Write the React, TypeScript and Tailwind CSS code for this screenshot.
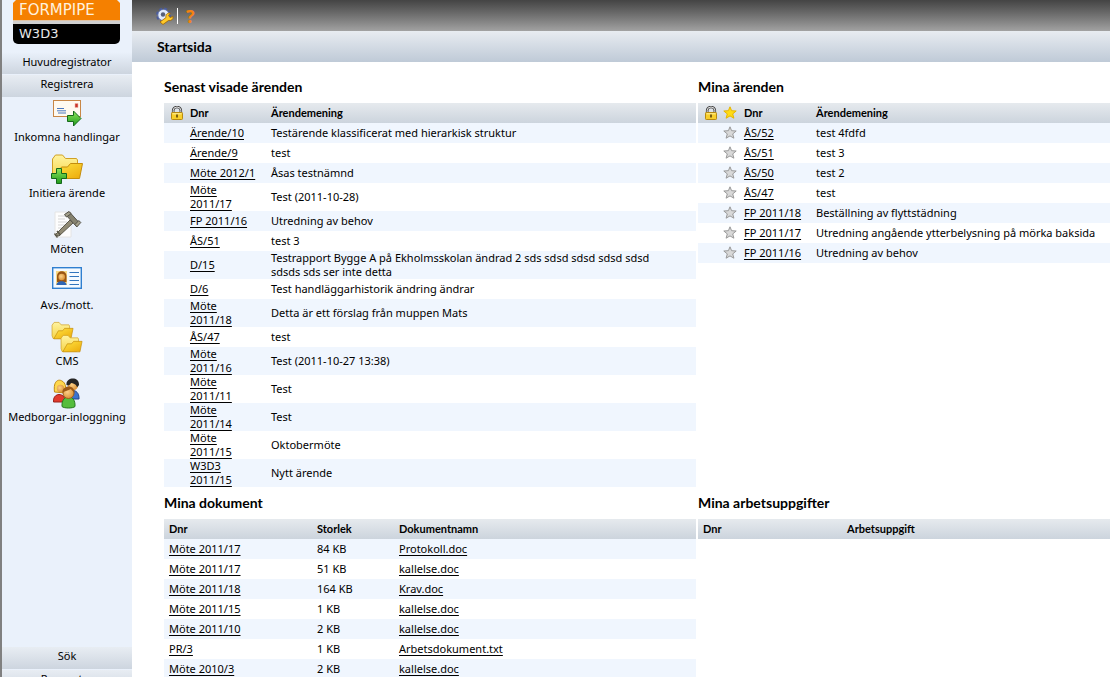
import React from "react";

const cases = [
  ["Ärende/10", "Testärende klassificerat med hierarkisk struktur"],
  ["Ärende/9", "test"],
  ["Möte 2012/1", "Åsas testnämnd"],
  ["Möte 2011/17", "Test (2011-10-28)"],
  ["FP 2011/16", "Utredning av behov"],
  ["ÅS/51", "test 3"],
  ["D/15", "Testrapport Bygge A på Ekholmsskolan ändrad 2 sds sdsd sdsd sdsd sdsd sdsds sds ser inte detta"],
  ["D/6", "Test handläggarhistorik ändring ändrar"],
  ["Möte 2011/18", "Detta är ett förslag från muppen Mats"],
  ["ÅS/47", "test"],
  ["Möte 2011/16", "Test (2011-10-27 13:38)"],
  ["Möte 2011/11", "Test"],
  ["Möte 2011/14", "Test"],
  ["Möte 2011/15", "Oktobermöte"],
  ["W3D3 2011/15", "Nytt ärende"],
];

const myCases = [
  ["ÅS/52", "test 4fdfd"],
  ["ÅS/51", "test 3"],
  ["ÅS/50", "test 2"],
  ["ÅS/47", "test"],
  ["FP 2011/18", "Beställning av flyttstädning"],
  ["FP 2011/17", "Utredning angående ytterbelysning på mörka baksida"],
  ["FP 2011/16", "Utredning av behov"],
];

const documents = [
  ["Möte 2011/17", "84 KB", "Protokoll.doc"],
  ["Möte 2011/17", "51 KB", "kallelse.doc"],
  ["Möte 2011/18", "164 KB", "Krav.doc"],
  ["Möte 2011/15", "1 KB", "kallelse.doc"],
  ["Möte 2011/10", "2 KB", "kallelse.doc"],
  ["PR/3", "1 KB", "Arbetsdokument.txt"],
  ["Möte 2010/3", "2 KB", "kallelse.doc"],
];

const Lock = () => (
  <svg width="14" height="14" viewBox="0 0 14 14" className="block" aria-hidden="true">
    <path d="M3.2 7V4.6a3.8 3.6 0 0 1 7.6 0V7" fill="none" stroke="#444" strokeWidth="2.6" />
    <path d="M3.2 7V4.6a3.8 3.6 0 0 1 7.6 0V7" fill="none" stroke="#e2e2e2" strokeWidth="1" />
    <rect x="1.5" y="6.5" width="11" height="7" rx=".8" fill="#f8cf2c" stroke="#b88a10" />
    <path d="M2.5 7.8h9" stroke="#fff0a0" />
    <path d="M7 8.6v3" stroke="#5b430a" strokeWidth="1.6" />
  </svg>
);

const Star = ({ gold = false }: { gold?: boolean }) => (
  <svg width="14" height="14" viewBox="0 0 14 14" className="block" aria-hidden="true">
    <path
      d="M7 .8l1.600 3.900 4.600.3-3.500 2.900 1.200 4.300L7 9.900l-3.900 2.300 1.200-4.300L.8 5l4.600-.3z"
      fill={gold ? "#ffdc14" : "#d8d8d8"}
      stroke={gold ? "#e6b400" : "#999"}
      strokeWidth="1"
      strokeLinejoin="round"
    />
  </svg>
);

const Defs = () => (
  <svg width="0" height="0" className="absolute" aria-hidden="true">
    <defs>
      <linearGradient id="back" x1="0" y1="0" x2="0" y2="1">
        <stop offset="0" stopColor="#fff3a0" />
        <stop offset="1" stopColor="#f6d548" />
      </linearGradient>
      <linearGradient id="front" x1="0" y1="0" x2="1" y2="1">
        <stop offset="0" stopColor="#ffe545" />
        <stop offset="1" stopColor="#eca908" />
      </linearGradient>
      <linearGradient id="green" x1="0" y1="0" x2="0" y2="1">
        <stop offset="0" stopColor="#8ee65c" />
        <stop offset="1" stopColor="#1f9a1c" />
      </linearGradient>
      <radialGradient id="skin" cx=".4" cy=".4" r=".7">
        <stop offset="0" stopColor="#fcd087" />
        <stop offset="1" stopColor="#d68a2d" />
      </radialGradient>
    </defs>
  </svg>
);

const MailIcon = () => (
  <svg width="32" height="32" viewBox="0 0 32 32" className="block" aria-hidden="true">
    <rect x="2.5" y="3.5" width="27" height="16" fill="#fffaf0" stroke="#c88746" />
    <path d="M24 6.500h3v4h-3z" fill="#c9342b" stroke="#efb5a5" strokeWidth=".6" />
    <path d="M6 11.500h7M6 13.800h9M7 16h8" stroke="#4a78c0" strokeWidth="1" />
    <path d="M16.500 18.500h6v-4.500l7.500 7.500-7.500 7.500v-4.500h-6z" fill="url(#green)" stroke="#14691a" strokeLinejoin="round" />
  </svg>
);

const Folder = () => (
  <>
    <path d="M1.500 21V6l3-4h7l3 3.500h11l1 1.500V21l-3 4H3z" fill="url(#back)" stroke="#d0a024" strokeLinejoin="round" />
    <path d="M4 25.500L10.500 14h6l3-3.500h12L28.500 25.500z" fill="url(#front)" stroke="#c48d0c" strokeLinejoin="round" />
  </>
);

const NewCaseIcon = () => (
  <svg width="32" height="32" viewBox="0 0 32 32" className="block" aria-hidden="true">
    <Folder />
    <path d="M5.500 15.500h5v5h5v5h-5v5h-5v-5h-5v-5h5z" fill="url(#green)" stroke="#14691a" strokeLinejoin="round" />
  </svg>
);

const GavelIcon = () => (
  <svg width="32" height="32" viewBox="0 0 32 32" className="block" aria-hidden="true">
    <path d="M4 3h16v25H4z" fill="#fdfdfd" stroke="#e4e4e4" />
    <path d="M7 7h9M7 10h7M7 13h9M7 16h7M7 19h5" stroke="#d5d5d5" />
    <path d="M4 26L19 11l3 3L8 27z" fill="#918b75" stroke="#5c594b" strokeLinejoin="round" />
    <path d="M3.500 24.500l3 4M6 22l3.500 4" stroke="#5c594b" strokeWidth="1.500" />
    <path d="M14.500 5.500l4-2.500 9.500 10.500-3 3.500z" fill="#85826f" stroke="#55534a" strokeLinejoin="round" />
    <path d="M13.500 5.500L18 2.500l2 2.200-4.500 3.300zM24 15.500l3.800-4 2 2-4 4.500z" fill="#a39f89" stroke="#55534a" strokeLinejoin="round" />
  </svg>
);

const CardIcon = () => (
  <svg width="32" height="32" viewBox="0 0 32 32" className="block" aria-hidden="true">
    <rect x="1.700" y="2.700" width="28.600" height="20.600" fill="#f5faff" stroke="#2f7fd0" strokeWidth="1.400" />
    <path d="M5 6h11v14H5z" fill="#f7d987" />
    <path d="M6 17v-6c0-6.500 9.500-6.500 9.500 0v6z" fill="#9a5514" />
    <circle cx="10.700" cy="12" r="3.300" fill="url(#skin)" />
    <path d="M5.500 20c0-5 10-5 10 0z" fill="#2e65b5" />
    <path d="M18.500 7.500h9.500M18.500 11.500h9.500M18.500 15.500h9.500M18.500 19.500h9.500" stroke="#3275bd" strokeWidth="1" />
  </svg>
);

const FoldersIcon = () => (
  <svg width="32" height="32" viewBox="0 0 32 32" className="block" aria-hidden="true">
    <g transform="translate(0 0) scale(.7)"><Folder /></g>
    <g transform="translate(9 13) scale(.7)"><Folder /></g>
  </svg>
);

const PeopleIcon = () => (
  <svg width="32" height="32" viewBox="0 0 32 32" className="block" aria-hidden="true">
    <path d="M16 21c0-10 12-10 12 0v1H16z" fill="#3a73cf" stroke="#23488d" />
    <circle cx="22" cy="8.500" r="5" fill="url(#skin)" />
    <path d="M15.500 8c-1-8 13-9 12.500 0-1 1.500-1.500 2-2 2-1-3-4-4-6-4-1 2-2.500 3-4.500 2z" fill="#252525" />
    <path d="M2.500 25c-1-10 12-10 12 0z" fill="#e23a2c" stroke="#9a221b" />
    <path d="M3.500 15C2 3 8 2 11 4c4 2 4 7 3.500 12z" fill="#ffd84e" stroke="#c18b16" />
    <circle cx="9.500" cy="11.500" r="3.700" fill="url(#skin)" />
    <path d="M11 29.500c-1-13 14-13 13 0-2 2-11 2-13 0z" fill="#55bd3c" stroke="#26781e" />
    <circle cx="17.500" cy="16" r="5.500" fill="url(#skin)" stroke="#9d5d1c" />
    <path d="M11.500 16c-1-8 12.500-9 12 0-2-2-3-3.500-4-4-2 2-5 1-8 4z" fill="#9d5a17" />
  </svg>
);

const ToolsIcon = () => (
  <svg width="18" height="18" viewBox="0 0 18 18" className="block" aria-hidden="true">
    <circle cx="7.500" cy="8" r="6.200" fill="none" stroke="#4b5c9c" strokeWidth="2.600" strokeDasharray="2.800 2.070" />
    <circle cx="7.500" cy="8" r="5.600" fill="#e2ebfc" stroke="#5f72ad" strokeWidth=".8" />
    <circle cx="7" cy="7.500" r="2.200" fill="#565f79" />
    <path d="M4 15l6-4.500c-.8-3 1.500-5 4.500-4.500l-2 2.500 1.500 2 3.200-1c.2 3-2.200 4.600-4.700 4L7 17.500z" fill="#ffc928" stroke="#9d6508" strokeWidth=".8" strokeLinejoin="round" />
  </svg>
);

const Logo = () => (
  <svg width="107" height="44" viewBox="0 0 107 44" className="block" role="img" aria-label="Formpipe W3D3">
    <path d="M0 3l3-3h101l3 3v17.500H0z" fill="#f58000" />
    <path d="M0 20.500h107V24H0z" fill="#d0d0d0" />
    <path d="M0 24h107v15a5 5 0 0 1-5 5H5a5 5 0 0 1-5-5z" fill="#000" />
    <text x="6" y="15" fill="#fff0dc" fontFamily="DejaVu Sans, sans-serif" fontSize="15">FORMPIPE</text>
    <text x="6" y="38" fill="#e8e8e8" fontFamily="DejaVu Sans, sans-serif" fontSize="13">W3D3</text>
  </svg>
);

const navItems = [
  { label: "Inkomna handlingar", icon: <MailIcon /> },
  { label: "Initiera ärende", icon: <NewCaseIcon /> },
  { label: "Möten", icon: <GavelIcon /> },
  { label: "Avs./mott.", icon: <CardIcon /> },
  { label: "CMS", icon: <FoldersIcon /> },
  { label: "Medborgar-inloggning", icon: <PeopleIcon /> },
];

const headRow = "h-5 bg-linear-to-b from-[#e6eaee] to-[#ccd4dd] text-left font-[Lato,sans-serif]";
const bodyRow = "h-5 odd:bg-[#f0f6fe]";
const bar = "block h-[22px] w-full shrink-0 bg-linear-to-b from-[#e8edf3] to-[#cdd5df] pb-1 text-center";

const Title = ({ children }: { children: React.ReactNode }) => (
  <h2 className="flex h-8 items-center font-[Lato,sans-serif] text-[14px] font-bold">{children}</h2>
);

const Ref = ({ children }: { children: React.ReactNode }) => (
  <a href="#" className="underline underline-offset-2">{children}</a>
);

export default function App() {
  return (
    <div className="flex h-screen overflow-hidden bg-white font-['Noto_Sans',sans-serif] text-[11px] leading-[14px] text-black">
      <Defs />
      <aside className="flex w-[132px] shrink-0 flex-col overflow-hidden border-l-2 border-[#808080] bg-[#eaf1fb]">
        <div className="pl-[11px]"><Logo /></div>
        <div className="mt-2 h-[22px] shrink-0 bg-linear-to-b from-[#eaf1fb] to-[#cdd5df] pt-[3px] text-center">Huvudregistrator</div>
        <button className={bar + " mt-px"}>Registrera</button>
        <nav className="flex flex-1 flex-col">
          {navItems.map((item) => (
            <a key={item.label} href="#" className="flex h-14 shrink-0 flex-col items-center gap-px whitespace-nowrap">
              {item.icon}
              {item.label}
            </a>
          ))}
        </nav>
        <button className={bar}>Sök</button>
        <button className={bar + " mt-px -mb-[15px]"}>Rapporter</button>
      </aside>
      <main className="min-w-0 flex-1">
        <header>
          <div className="flex h-[31px] items-center bg-linear-to-b from-[#444] to-[#a2a2a2] pl-6">
            <button aria-label="Inställningar"><ToolsIcon /></button>
            <span className="ml-[3px] h-4 w-px bg-white" />
            <button className="ml-2 font-['Open_Sans'] text-[18px] leading-5 font-bold text-[#f58210]">?</button>
          </div>
          <h1 className="flex h-[31px] items-center bg-linear-to-b from-[#e8ecf1] to-[#bfcad7] pl-[25px] font-[Lato,sans-serif] text-[14px] font-bold">Startsida</h1>
        </header>
        <div className="grid grid-cols-[532fr_412fr] gap-x-0.5 pt-[9px] pl-8">
          <section className="min-w-0">
            <Title>Senast visade ärenden</Title>
            <table className="w-full table-fixed">
              <colgroup><col className="w-[26px]" /><col className="w-[81px]" /><col /></colgroup>
              <thead><tr className={headRow}><th className="pl-1.5"><Lock /></th><th>Dnr</th><th>Ärendemening</th></tr></thead>
              <tbody>
                {cases.map(([id, text]) => (
                  <tr key={id} className={bodyRow}><td /><td className="pr-3"><Ref>{id}</Ref></td><td className="pr-5">{text}</td></tr>
                ))}
              </tbody>
            </table>
          </section>
          <section className="min-w-0">
            <Title>Mina ärenden</Title>
            <table className="w-full table-fixed">
              <colgroup><col className="w-[25px]" /><col className="w-[21px]" /><col className="w-[72px]" /><col /></colgroup>
              <thead><tr className={headRow}><th className="pl-1.5"><Lock /></th><th><Star gold /></th><th>Dnr</th><th>Ärendemening</th></tr></thead>
              <tbody>
                {myCases.map(([id, text]) => (
                  <tr key={id} className={bodyRow}><td /><td><Star /></td><td><Ref>{id}</Ref></td><td className="overflow-hidden whitespace-nowrap">{text}</td></tr>
                ))}
              </tbody>
            </table>
          </section>
          <section className="min-w-0">
            <Title>Mina dokument</Title>
            <table className="w-full table-fixed">
              <colgroup><col className="w-[153px]" /><col className="w-[82px]" /><col /></colgroup>
              <thead><tr className={headRow}><th className="pl-[5px]">Dnr</th><th>Storlek</th><th>Dokumentnamn</th></tr></thead>
              <tbody>
                {documents.map(([id, size, name], i) => (
                  <tr key={i} className={bodyRow}><td className="pl-[5px]"><Ref>{id}</Ref></td><td>{size}</td><td><Ref>{name}</Ref></td></tr>
                ))}
              </tbody>
            </table>
          </section>
          <section className="min-w-0">
            <Title>Mina arbetsuppgifter</Title>
            <table className="w-full table-fixed">
              <colgroup><col className="w-[149px]" /><col /></colgroup>
              <thead><tr className={headRow}><th className="pl-[5px]">Dnr</th><th>Arbetsuppgift</th></tr></thead>
            </table>
          </section>
        </div>
      </main>
    </div>
  );
}
